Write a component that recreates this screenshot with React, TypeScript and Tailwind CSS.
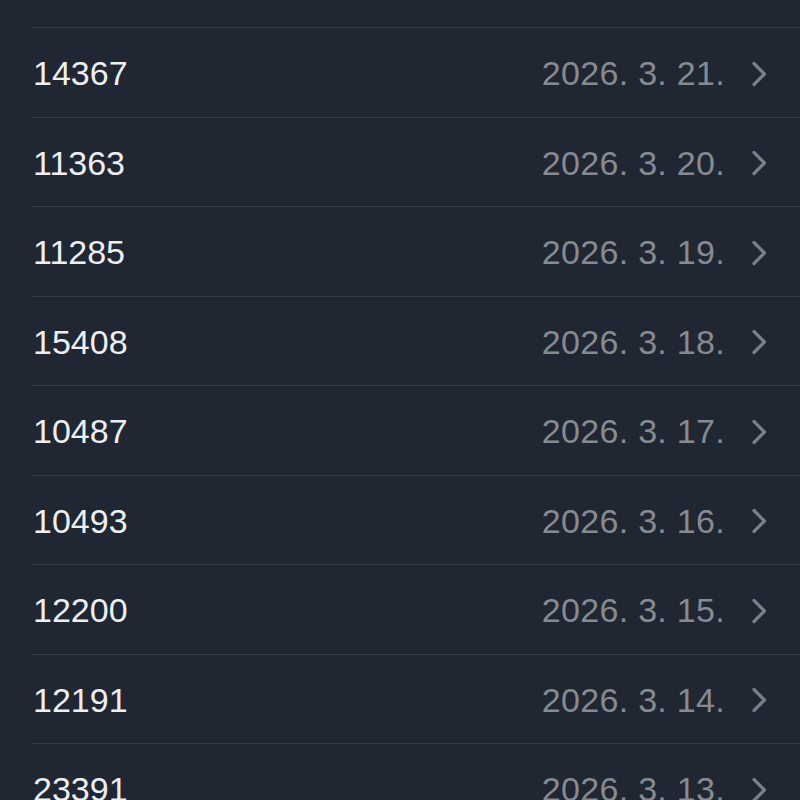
const rows = [
  { value: "14367", date: "2026. 3. 21." },
  { value: "11363", date: "2026. 3. 20." },
  { value: "11285", date: "2026. 3. 19." },
  { value: "15408", date: "2026. 3. 18." },
  { value: "10487", date: "2026. 3. 17." },
  { value: "10493", date: "2026. 3. 16." },
  { value: "12200", date: "2026. 3. 15." },
  { value: "12191", date: "2026. 3. 14." },
  { value: "23391", date: "2026. 3. 13." },
];

function Chevron() {
  return (
    <svg width="16" height="26" viewBox="0 0 16 26" fill="none" className="shrink-0">
      <path d="M3 2.5 L13.5 13 L3 23.5" stroke="#7b7f86" strokeWidth="3.2" strokeLinecap="round" strokeLinejoin="round" />
    </svg>
  );
}

export default function App() {
  return (
    <div className="h-[800px] w-[800px] overflow-hidden bg-[#202733] font-['Liberation_Sans',Arial,sans-serif]">
      {/* list is scrolled, previous row is cut off above */}
      <div className="ml-[32px] h-[28px] border-b border-[#343b47]" />
      <ul className="pl-[32px]">
        {rows.map((r) => (
          <li key={r.value} className="flex h-[89.5px] items-center border-b border-[#343b47] pr-[33px] pt-[3px]">
            <span className="pl-[1px] text-[34px] text-[#eceef1]">{r.value}</span>
            <span className="ml-auto text-[34px] tracking-[0.3px] text-[#868a91]">{r.date}</span>
            <span className="ml-[26px] flex">
              <Chevron />
            </span>
          </li>
        ))}
      </ul>
    </div>
  );
}
